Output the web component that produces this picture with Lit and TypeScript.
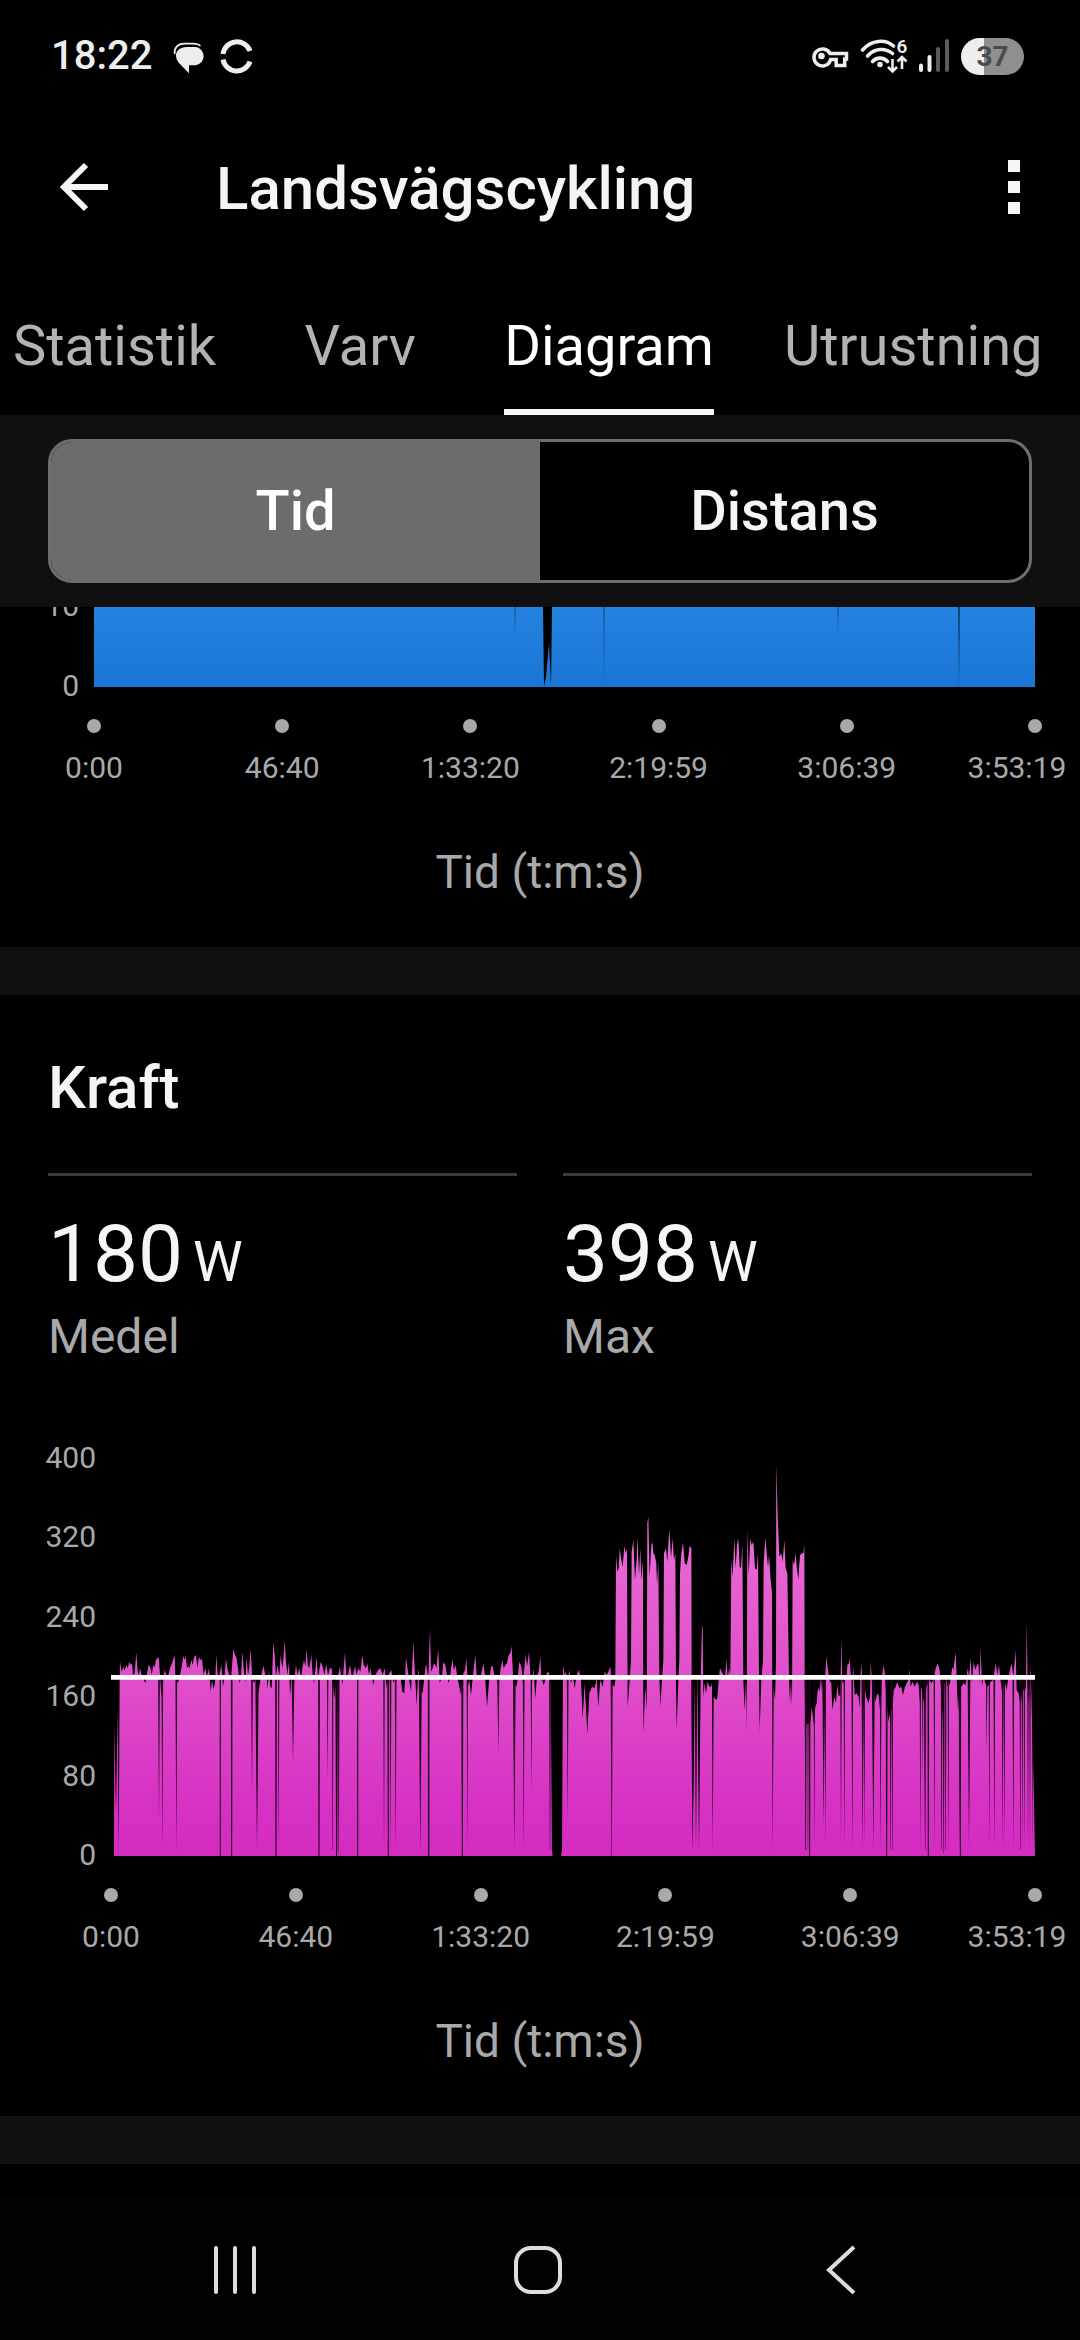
import { LitElement, html, css, svg } from "lit";
import { customElement, property, state } from "lit/decorators.js";

type Slit = [x: number, topWidth: number, bottom: number, bottomWidth: number];

const TIMES = ["0:00", "46:40", "1:33:20", "2:19:59", "3:06:39", "3:53:19"];

/* Power samples as x,y pairs inside the plot's own coordinate box. */
const POWER = `
72,1308 73,910 78,1180 83,870 86,1300 89,780 90,725 95,755 100,740 104,752 109,735 113,745 118,725 122,735 126,730 129,765
134,760 139,697 143,755 147,765 150,745 155,765 166,790 170,765 176,735 181,742 185,765 190,735 194,742 198,720 202,715
206,712 210,765 214,830 219,780 224,750 229,765 235,765 240,745 246,730 254,705 256,765 264,790 270,765 275,740 280,708
284,720 287,708 291,745 295,738 299,745 304,720 308,735 312,712 318,705 322,745 327,712 332,720 336,718 341,765 346,745
351,770 357,745 362,815 366,780 370,808 375,790 379,705 383,765 388,765 394,735 399,800 404,765 408,715 413,750 418,765
424,765 430,686 435,705 439,712 444,745 449,790 453,770 457,695 461,745 466,790 470,710 474,765 478,740 482,685 486,765
492,790 498,775 505,820 512,775 520,737 525,760 530,775 533,805 537,750 541,800 545,805 550,665 554,705 558,770 563,735
568,770 572,705 577,745 580,720 584,660 588,725 592,765 597,725 600,830 604,770 612,790 618,735 622,765 628,745 633,775
637,745 642,720 646,740 650,685 653,735 658,745 664,705 668,765 672,790 680,710 684,775 692,725 698,740 703,765 709,732
714,765 720,745 725,745 727,765 733,835 740,775 745,765 750,740 757,795 765,697 769,765 774,765 780,735 785,765 789,765
795,738 799,765 805,745 811,755 817,705 821,735 828,745 832,730 837,765 841,745 850,795 856,765 864,750 871,745 878,765
884,745 890,805 895,765 904,750 910,790 917,765 925,775 930,760 937,815 943,820 948,712 955,765 963,815 970,665 975,765
980,850 985,745 990,800 998,820 1003,770 1008,730 1015,775
1020,625 1023,755 1028,745 1032,730 1036,735 1039,745 1045,687 1049,790 1056,770 1060,727 1066,735 1070,760 1076,790
1080,770 1087,718 1092,750 1097,735 1101,765 1108,800 1113,825 1118,765 1125,750 1129,715 1134,800 1138,780 1143,825
1149,765 1156,705 1160,765 1167,775 1173,765 1180,730 1185,765 1191,860 1197,785 1203,740 1208,738 1213,765 1220,770
1225,800 1232,745 1237,720 1241,745 1246,735 1251,730 1256,705 1261,700 1265,678 1269,765 1274,790 1280,800 1288,725
1294,740 1299,790 1307,702 1311,740 1317,695 1321,765 1326,790 1331,745 1336,835 1341,765 1346,755 1351,710 1354,770
1360,795 1365,785 1370,760 1376,755 1382,790 1386,1290 1388,1308
1413,1308 1416,1290 1419,735 1424,765 1428,755 1432,790 1438,750 1443,790 1448,765 1454,805 1460,765 1467,750 1473,780
1478,895 1484,790 1492,940 1498,820 1506,800 1514,805 1520,775 1525,860 1531,780 1538,800 1544,755 1550,765 1555,755
1561,740 1565,790 1573,800 1576,780 1578,405 1582,455 1586,445 1589,385 1593,415 1598,440 1603,378 1607,400 1611,385
1613,860 1619,780 1623,720 1625,395 1630,360 1635,480 1640,420 1642,350 1647,465 1651,385 1654,480 1659,420 1660,940
1666,800 1670,870 1672,310 1675,290 1679,470 1684,375 1687,365 1690,400 1694,405 1699,430 1701,495 1705,425 1708,770
1711,860 1716,780 1720,720 1722,400 1728,385 1732,425 1738,325 1743,415 1748,355 1752,420 1756,400 1758,780 1760,930
1765,780 1768,720 1770,460 1774,400 1779,368 1784,430 1790,435 1795,410 1799,378 1804,385 1805,780 1807,1290 1811,1100
1814,780 1818,1290 1822,735 1827,1290 1832,780 1836,615 1838,625 1840,830 1844,790 1848,820 1853,785 1858,800 1863,800
1866,790 1868,1290 1871,830 1878,840 1882,835 1886,780 1890,745 1895,755 1900,765 1905,780 1909,715 1913,775 1918,745
1921,765 1924,420 1928,470 1933,355 1937,445 1941,375 1945,355 1949,440 1953,445 1957,370 1960,780 1964,870 1968,780
1970,935 1972,325 1976,465 1981,355 1985,375 1990,365 1995,445 2000,450 2004,400 2007,780 2009,930 2014,780 2019,720
2021,430 2026,352 2030,400 2034,440 2037,405 2042,480 2046,520 2048,1300 2051,800 2055,840 2058,720 2059,130 2063,290
2068,410 2074,400 2078,425 2083,360 2087,445 2092,460 2097,770 2100,850 2103,780 2106,860 2108,420 2112,435 2117,400
2120,440 2125,478 2130,405 2136,400 2140,400 2143,375 2144,780 2146,910 2150,912 2154,912 2158,912 2162,900 2165,860
2172,915 2176,860 2180,850 2184,800 2188,815 2193,775 2196,815 2198,780 2202,800 2206,765 2209,708 2213,745 2218,780
2224,790 2227,870 2233,830 2238,850 2242,795 2246,828 2251,825 2254,650 2257,790 2264,780 2270,765 2272,735 2277,730
2279,712 2282,765 2287,790 2290,740 2294,825 2300,820 2306,830 2309,865 2313,725 2318,790 2322,780 2328,830 2336,850
2340,830 2342,722 2346,790 2356,845 2362,820 2366,825 2372,890 2375,775 2381,735 2385,765 2390,850 2396,905 2400,880
2404,870 2408,860 2411,810 2417,800 2422,785 2428,805 2434,800 2439,825 2445,800 2450,790 2455,780 2458,748 2462,800
2468,785 2474,800 2481,785 2486,795 2490,850 2494,800 2500,840 2506,860 2509,800 2518,780 2525,790 2532,775 2537,745
2543,730 2549,750 2554,820 2559,900 2563,790 2569,780 2574,800 2580,790 2587,740 2590,750 2597,697 2601,800 2604,875
2609,790 2615,800 2620,790 2627,795 2633,745 2637,770 2642,715 2646,790 2651,725 2656,750 2661,735 2665,730 2669,790
2672,680 2676,800 2680,765 2686,790 2692,800 2698,790 2703,785 2709,780 2712,765 2717,728 2722,765 2727,735 2730,770
2737,820 2743,780 2750,810 2754,780 2760,750 2765,730 2770,770 2777,690 2780,810 2786,820 2792,860 2798,800 2803,820
2808,800 2810,600 2813,800 2817,850 2822,740 2826,900 2831,1100 2835,1308`;

/* Moments of coasting: narrow dark cuts that reach down from the average line. */
const COASTING: Slit[] = [
  [207, 5, 1200, 0], [217, 5, 1290, 0], [259, 5, 1300, 0], [391, 4, 1308, 3], [425, 5, 1308, 3], [486, 5, 1120, 0],
  [501, 10, 1290, 0], [558, 5, 1308, 3], [566, 4, 1290, 0], [609, 8, 1030, 0], [687, 5, 1308, 3], [713, 4, 1080, 0],
  [728, 4, 1290, 1], [740, 8, 1308, 3], [746, 5, 1300, 1], [803, 4, 1308, 3], [882, 4, 1290, 0], [895, 6, 1308, 3],
  [902, 4, 1300, 0], [917, 5, 1290, 0], [980, 4, 860, 0], [991, 9, 1300, 0], [1016, 5, 1308, 4], [1117, 6, 1308, 3],
  [1132, 4, 1290, 0], [1225, 6, 1000, 0], [1273, 8, 1290, 0], [1301, 5, 1290, 0], [1324, 4, 1120, 0], [1380, 5, 1290, 1],
  [1433, 5, 1200, 0], [1565, 6, 1308, 1], [1807, 6, 1290, 0], [2147, 6, 1290, 2], [2154, 4, 1290, 1], [2159, 5, 1308, 3],
  [2173, 4, 1290, 0], [2201, 8, 1220, 0], [2206, 4, 1290, 0], [2253, 4, 1280, 0], [2263, 4, 1290, 0], [2287, 5, 1290, 0],
  [2318, 7, 1290, 0], [2323, 4, 1280, 0], [2350, 9, 1290, 0], [2372, 5, 1290, 0], [2390, 6, 1308, 3], [2402, 5, 1290, 1],
  [2407, 4, 1290, 1], [2491, 4, 1290, 0], [2497, 3, 1100, 0], [2503, 4, 1280, 0], [2507, 3, 1290, 1], [2515, 5, 1308, 3],
  [2533, 4, 1290, 0], [2555, 5, 1290, 1], [2561, 6, 1300, 1], [2567, 4, 1290, 1], [2575, 4, 1290, 0], [2608, 4, 1290, 0],
  [2611, 5, 1308, 3], [2637, 8, 1280, 0], [2690, 4, 1000, 0], [2698, 4, 1290, 0], [2713, 5, 1290, 0], [2738, 5, 1290, 0],
  [2743, 4, 1290, 0], [2770, 5, 1290, 0], [2791, 4, 1290, 1], [2797, 4, 1290, 0], [2803, 4, 1290, 0], [2814, 4, 1290, 0],
  [2820, 4, 1290, 0], [2828, 4, 1290, 0],
];

const SPEED = "0,0 449,0 450,79 452,70 455,36 457,79 458,0 941,0 941,80 0,80";
const STOPS: Slit[] = [[421, 1, 27, 0], [510, 1, 80, 0], [744, 1, 26, 0], [865, 2, 80, 0]];

const slitPath = (slits: Slit[], top: number) =>
  slits
    .map(([x, w, bottom, b]) => `M${x - w / 2} ${top}H${x + w / 2}L${x + b / 2} ${bottom}H${x - b / 2}Z`)
    .join("");

@customElement("time-chart")
class TimeChart extends LitElement {
  @property() kind: "speed" | "power" = "power";
  @property({ attribute: false }) marks: string[] = [];

  static styles = css`
    :host {
      display: block;
      color: #a9a9a9;
      font-size: 30px;
      line-height: 36px;
    }
    .frame {
      display: grid;
      grid-template-columns: 96px 1fr;
      column-gap: 15px;
      padding-right: 45px;
    }
    .frame.speed {
      grid-template-columns: 79px 1fr;
    }
    .scale {
      display: flex;
      flex-direction: column;
      justify-content: space-between;
      margin: -1px 0 1px;
      text-align: right;
    }
    .mark {
      height: 0;
      line-height: 0;
    }
    .plot {
      display: block;
      width: 100%;
      height: 397px;
      overflow: visible;
    }
    .speed .plot {
      height: 80px;
    }
    .axis {
      grid-column: 2;
      display: flex;
      justify-content: space-between;
      padding-top: 32px;
    }
    .tick {
      display: flex;
      flex-direction: column;
      align-items: center;
      gap: 17px;
      width: 0;
      white-space: nowrap;
    }
    .tick:last-child .time {
      margin-right: 36px;
    }
    .dot {
      width: 14px;
      height: 14px;
      border-radius: 50%;
      background: #a9a9a9;
    }
    .caption {
      margin: 58px 0 0;
      padding-bottom: 47px;
      font-size: 46px;
      line-height: 56px;
      text-align: center;
    }
  `;

  private plotPower() {
    return html`<svg class="plot" viewBox="63 117 2772 1191" preserveAspectRatio="none" role="img" aria-label="Kraft">
      ${svg`<defs><linearGradient id="pink" gradientUnits="userSpaceOnUse" x1="0" y1="117" x2="0" y2="1308">
          <stop offset="0" stop-color="#ee7adb"></stop><stop offset="0.55" stop-color="#e04eca"></stop>
          <stop offset="0.9" stop-color="#d62fc3"></stop><stop offset="1" stop-color="#d42cc1"></stop>
        </linearGradient></defs>
        <polygon points=${POWER} fill="url(#pink)"></polygon>
        <path d=${slitPath(COASTING, 778)} fill="#1c0019"></path>
        <path d="M63 765H2835V779H63Z" fill="#fff"></path>`}
    </svg>`;
  }

  private plotSpeed() {
    return html`<svg class="plot" viewBox="0 0 941 80" preserveAspectRatio="none" role="img" aria-label="Hastighet">
      ${svg`<defs><linearGradient id="blue" x1="0" y1="0" x2="0" y2="1">
          <stop offset="0" stop-color="#2682e0"></stop><stop offset="1" stop-color="#1a76d4"></stop>
        </linearGradient></defs>
        <polygon points=${SPEED} fill="url(#blue)"></polygon>
        <path d=${slitPath(STOPS, 0)} fill="#0b3f78"></path>`}
    </svg>`;
  }

  render() {
    return html`
      <div class="frame ${this.kind}">
        <div class="scale">${this.marks.map((m) => html`<span class="mark">${m}</span>`)}</div>
        ${this.kind === "power" ? this.plotPower() : this.plotSpeed()}
        <div class="axis">
          ${TIMES.map((t) => html`<div class="tick"><span class="dot"></span><span class="time">${t}</span></div>`)}
        </div>
      </div>
      <p class="caption">Tid (t:m:s)</p>
    `;
  }
}

@customElement("status-bar")
class StatusBar extends LitElement {
  static styles = css`
    :host {
      display: flex;
      align-items: center;
      height: 112px;
      padding: 0 56px 0 51px;
      box-sizing: border-box;
      color: #eee;
    }
    .clock {
      font-size: 40px;
      line-height: 48px;
      font-weight: 500;
      flex: 1;
      display: flex;
      align-items: center;
      gap: 21px;
    }
    .notices,
    .signals {
      display: block;
      overflow: visible;
    }
    .battery {
      display: flex;
      align-items: center;
      justify-content: center;
      width: 63px;
      height: 37px;
      margin-left: 11px;
      border-radius: 19px;
      background: linear-gradient(90deg, #eee 37%, #8f8f8f 37%);
      color: #4b4b4b;
      font-size: 28px;
      line-height: 37px;
      font-weight: 700;
    }
  `;

  render() {
    return html`
      <div class="clock">
        <span>18:22</span>
        <svg class="notices" width="80" height="36" viewBox="172 37 80 36" aria-hidden="true">
          <path d="M186 46h9a9.300 9.300 0 0 1 0 18.300h-7v8L177.500 61.500a9.500 9.500 0 0 1 -2.500-6.500c0-5.500 4-9 11-9z" fill="#eee"/>
          <path d="M173.800 53c-1-6 3-10.300 9.500-10.300h8c4 0 6.500 0.500 8 2.300" fill="none" stroke="#eee" stroke-width="1.800"/>
          <path d="M222 53a14 14 0 0 1 27-3M222 58.500a14 14 0 0 0 27 2" fill="none" stroke="#eee" stroke-width="5"/>
        </svg>
      </div>
      <svg class="signals" width="139" height="36" viewBox="810 37 139 36" aria-hidden="true">
        <path d="M829 52.500h16.500v5.500h-1.800v6.500h-8.500v-6h-5.500a8.500 8.500 0 1 1 -0.700-6z" fill="none" stroke="#eee" stroke-width="3.500"/>
        <circle cx="820.500" cy="55" r="3.300" fill="#eee"/>
        <g fill="none" stroke="#eee" stroke-width="3.600">
          <path d="M861.500 49c9-10.500 23-11 31-4" stroke-linecap="round"/>
          <path d="M866.500 55c7-8 18-8.500 25-2.500" stroke-linecap="round"/>
          <path d="M871.500 60.500c4-4.500 11-4.500 15 0" stroke-linecap="round"/>
        </g>
        <circle cx="879" cy="63.500" r="2.800" fill="#eee"/>
        <path d="M891.500 58v12M887 66l4.500 4.500 4.500-4.500M901 68v-12M896.500 60.500l4.500-4.500 4.500 4.500" fill="none" stroke="#eee" stroke-width="2.600"/>
        <text x="895.500" y="52" font-size="19" font-weight="600" fill="#eee">6</text>
        <g stroke-width="4" stroke-linecap="round">
          <path d="M920 64.500v4.500M928.500 56v13" stroke="#eee"/>
          <path d="M937 48v21M946 40v29" stroke="#5c5c5c"/>
        </g>
      </svg>
      <span class="battery">37</span>
    `;
  }
}

@customElement("app-root")
class AppRoot extends LitElement {
  @state() private tab = "Diagram";
  @state() private mode = "Tid";

  static styles = css`
    :host {
      display: flex;
      flex-direction: column;
      height: 100vh;
      overflow: hidden;
      background: #000;
      color: #f5f5f5;
      font-family: Roboto, "Liberation Sans", sans-serif;
    }
    button {
      margin: 0;
      border: 0;
      padding: 0;
      background: none;
      color: inherit;
      font: inherit;
      cursor: pointer;
    }
    svg {
      display: block;
    }
    .header {
      display: flex;
      align-items: center;
      height: 150px;
      padding: 0 54px;
    }
    .title {
      flex: 1;
      margin: 0;
      padding: 4px 0 0 102px;
      font-size: 60px;
      line-height: 70px;
      font-weight: 500;
    }
    .tabs {
      display: flex;
      flex: none;
      height: 153px;
      margin-left: -22px;
      overflow: hidden;
      font-size: 56px;
      line-height: 66px;
      color: #b3b3b3;
    }
    .tab {
      display: flex;
      justify-content: center;
      flex: none;
      min-width: 218px;
      padding: 0 35px;
      box-sizing: border-box;
    }
    .tab-label {
      height: 100%;
      padding-top: 51px;
      box-sizing: border-box;
    }
    .tab.active .tab-label {
      color: #fff;
      border-bottom: 6px solid #f5f5f5;
    }
    .toolbar {
      flex: none;
      padding: 24px 48px;
      background: #101010;
    }
    .segments {
      display: grid;
      grid-template-columns: 1fr 1fr;
      height: 144px;
      box-sizing: border-box;
      border: 3px solid #6e6e6e;
      border-radius: 24px;
      overflow: hidden;
      background: #000;
    }
    .segment {
      font-size: 56px;
      line-height: 66px;
      font-weight: 500;
    }
    .segment.active {
      background: #6c6c6c;
      color: #fff;
    }
    .content {
      flex: 1;
      min-height: 0;
      overflow: hidden;
    }
    .card {
      border-bottom: 48px solid #101010;
    }
    .name {
      margin: 0;
      padding: 58px 48px 50px;
      font-size: 60px;
      line-height: 70px;
      font-weight: 500;
    }
    .stats {
      display: grid;
      grid-template-columns: 1fr 1fr;
      gap: 46px;
      margin: 0 48px 94px;
    }
    .stat {
      display: flex;
      flex-direction: column-reverse;
      gap: 8px;
      padding-top: 31px;
      border-top: 3px solid #3b3b3b;
    }
    .value {
      margin: 0;
      font-size: 80px;
      line-height: 94px;
    }
    .unit {
      margin-left: 10px;
      font-size: 56px;
      line-height: 56px;
    }
    .label {
      font-size: 48px;
      line-height: 56px;
      color: #a9a9a9;
    }
    .nav {
      flex: none;
      display: grid;
      grid-template-columns: repeat(3, 1fr);
      height: 144px;
      padding: 4px 88px 0 84px;
      box-sizing: border-box;
      background: #020202;
    }
    .key {
      display: flex;
      align-items: center;
      justify-content: center;
    }
  `;

  private stat(label: string, value: number) {
    return html`<div class="stat">
      <dt class="label">${label}</dt>
      <dd class="value">${value}<span class="unit">W</span></dd>
    </div>`;
  }

  render() {
    return html`
      <status-bar></status-bar>
      <header class="header">
        <button aria-label="Tillbaka">
          <svg width="60" height="60" viewBox="54 157 60 60">
            <path d="M108 187H65M86 165L64 187L86 209" fill="none" stroke="#f5f5f5" stroke-width="6" />
          </svg>
        </button>
        <h1 class="title">Landsvägscykling</h1>
        <button aria-label="Fler alternativ">
          <svg width="24" height="60" viewBox="1002 157 24 60">
            <path d="M1008 160h12v12h-12zM1008 181h12v12h-12zM1008 202h12v12h-12z" fill="#f5f5f5" />
          </svg>
        </button>
      </header>
      <nav class="tabs" role="tablist">
        ${["Statistik", "Varv", "Diagram", "Utrustning"].map(
          (t) => html`<button
            class="tab ${t === this.tab ? "active" : ""}"
            role="tab"
            aria-selected=${t === this.tab}
            @click=${() => (this.tab = t)}
          ><span class="tab-label">${t}</span></button>`
        )}
      </nav>
      <div class="toolbar">
        <div class="segments">
          ${["Tid", "Distans"].map(
            (m) => html`<button
              class="segment ${m === this.mode ? "active" : ""}"
              aria-pressed=${m === this.mode}
              @click=${() => (this.mode = m)}
            >${m}</button>`
          )}
        </div>
      </div>
      <main class="content">
        <section class="card">
          <time-chart kind="speed" .marks=${["10", "0"]}></time-chart>
        </section>
        <section class="card">
          <h2 class="name">Kraft</h2>
          <dl class="stats">${this.stat("Medel", 180)}${this.stat("Max", 398)}</dl>
          <time-chart kind="power" .marks=${["400", "320", "240", "160", "80", "0"]}></time-chart>
        </section>
      </main>
      <div class="nav">
        <button class="key" aria-label="Senaste">
          <svg width="48" height="50" viewBox="0 0 48 50">
            <path d="M5 3V47M24 3V47M43 3V47" stroke="#ddd" stroke-width="4" stroke-linecap="round" />
          </svg>
        </button>
        <button class="key" aria-label="Hem">
          <svg width="50" height="50" viewBox="0 0 50 50">
            <rect x="3" y="3" width="44" height="44" rx="15" fill="none" stroke="#ddd" stroke-width="4" />
          </svg>
        </button>
        <button class="key" aria-label="Bakåt">
          <svg width="34" height="50" viewBox="0 0 34 50">
            <path d="M30 2L5 25L30 48" fill="none" stroke="#ddd" stroke-width="4" />
          </svg>
        </button>
      </div>
    `;
  }
}
